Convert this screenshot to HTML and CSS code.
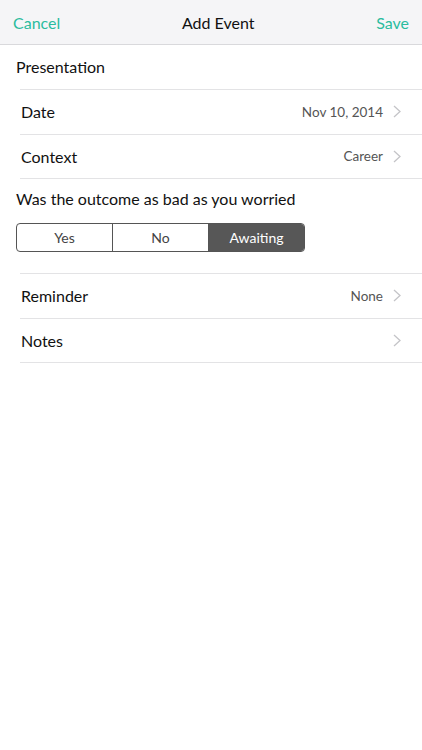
FILE: index.html
```html
<!DOCTYPE html>
<html>
<head>
<meta charset="utf-8">
<link rel="stylesheet" href="styles.css">
</head>
<body>
<div class="screen">
  <header class="nav">
    <span class="nav-btn">Cancel</span>
    <span class="nav-title">Add Event</span>
    <span class="nav-btn">Save</span>
  </header>
  <div class="title-row">Presentation</div>
  <ul class="list">
    <li class="row"><span class="label">Date</span><span class="value">Nov 10, 2014</span><svg class="chev" viewBox="0 0 8 13"><path d="M1 1l6 5.5L1 12" /></svg></li>
    <li class="row"><span class="label">Context</span><span class="value">Career</span><svg class="chev" viewBox="0 0 8 13"><path d="M1 1l6 5.5L1 12" /></svg></li>
  </ul>
  <div class="question">Was the outcome as bad as you worried</div>
  <div class="segmented">
    <span class="seg">Yes</span>
    <span class="seg">No</span>
    <span class="seg active">Awaiting</span>
  </div>
  <ul class="list list-bottom">
    <li class="row"><span class="label">Reminder</span><span class="value">None</span><svg class="chev" viewBox="0 0 8 13"><path d="M1 1l6 5.5L1 12" /></svg></li>
    <li class="row"><span class="label">Notes</span><span class="value"></span><svg class="chev" viewBox="0 0 8 13"><path d="M1 1l6 5.5L1 12" /></svg></li>
  </ul>
</div>
</body>
</html>
```

FILE: styles.css
```css
* { box-sizing: border-box; }
html, body { margin: 0; padding: 0; background: #fff; }
body {
  font-family: Lato, "Noto Sans", "Liberation Sans", sans-serif;
  color: #111;
  width: 422px;
  height: 750px;
  overflow: hidden;
}
.screen { display: flex; flex-direction: column; }
.nav {
  height: 45px;
  background: #f5f5f7;
  border-bottom: 1px solid #d9d9dc;
  display: flex;
  align-items: center;
  justify-content: space-between;
  padding: 0 13px;
  font-size: 16px;
}
.nav-btn { color: #2bbc9e; }
.nav-title { color: #111; font-size: 16px; }
.title-row {
  height: 44px;
  display: flex;
  align-items: center;
  padding-left: 16px;
  padding-bottom: 2px;
  font-size: 16px;
}
.list { list-style: none; margin: 0; padding: 0 0 0 20px; }
.row {
  height: 45px;
  display: flex;
  align-items: center;
  border-top: 1px solid #e3e3e5;
  padding-right: 21px;
  padding-bottom: 1px;
}
.list .row:last-child { border-bottom: 1px solid #e3e3e5; }
.label { flex: 1; font-size: 16px; padding-left: 1px; }
.value { color: #555; font-size: 13.5px; margin-right: 10px; }
.chev { width: 8px; height: 13px; fill: none; stroke: #c4c4c8; stroke-width: 1.3; }
.question {
  padding: 10px 0 0 16px;
  font-size: 16px;
  height: 35px;
}
.segmented {
  margin: 9px 0 0 16px;
  width: 289px;
  height: 29px;
  display: flex;
  border: 1px solid #555;
  border-radius: 4px;
  overflow: hidden;
}
.seg {
  flex: 1;
  display: flex;
  align-items: center;
  justify-content: center;
  font-size: 14px;
  color: #444;
  border-left: 1px solid #555;
}
.seg:first-child { border-left: none; }
.seg.active { background: #575757; color: #fff; }
.list-bottom { margin-top: 21px; }
```
